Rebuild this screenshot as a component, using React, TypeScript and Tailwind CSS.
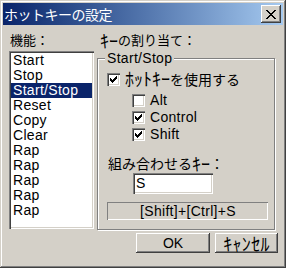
import React from 'react';

const items = ['Start', 'Stop', 'Start/Stop', 'Reset', 'Copy', 'Clear', 'Rap', 'Rap', 'Rap', 'Rap', 'Rap'];

const jp = { fontFamily: '"Noto Sans CJK JP", sans-serif' };

const raised =
  'shadow-[inset_-1px_-1px_0_#404040,inset_1px_1px_0_#ffffff,inset_-2px_-2px_0_#808080,inset_2px_2px_0_#d4d0c8]';
const sunken =
  'shadow-[inset_1px_1px_0_#808080,inset_2px_2px_0_#404040,inset_-1px_-1px_0_#ffffff,inset_-2px_-2px_0_#d4d0c8]';

function Kana({ children }: { children: React.ReactNode }) {
  return <span className="inline-block text-[18px] leading-[14px] align-top">{children}</span>;
}

function Check() {
  return (
    <svg width="7" height="7" viewBox="0 0 7 7" shapeRendering="crispEdges">
      <path d="M0 2h1v1h1v1h1v-1h1v-1h1v-1h1v-1h1v3h-1v1h-1v1h-1v1h-1v1h-1v-1h-1v-1h-1v-1h-1z" fill="#000" />
    </svg>
  );
}

function CheckBox({ checked, label }: { checked: boolean; label: string }) {
  return (
    <div className="flex items-center gap-[5px] h-[17px]">
      <span className={`w-[13px] h-[13px] bg-white flex items-center justify-center ${sunken}`}>
        {checked && <Check />}
      </span>
      <span className="text-[14px] leading-[17px] tracking-[0.3px]">{label}</span>
    </div>
  );
}

export default function App() {
  return (
    <div
      className="w-[286px] h-[268px] bg-[#d4d0c8] p-[3px] flex flex-col text-black shadow-[inset_-1px_-1px_0_#404040,inset_1px_1px_0_#d4d0c8,inset_-2px_-2px_0_#808080,inset_2px_2px_0_#ffffff]"
      style={{ fontFamily: '"Liberation Sans", "Noto Sans CJK JP", sans-serif' }}
    >
      <div className="h-[22px] flex items-center justify-between bg-gradient-to-r from-[#0a246a] to-[#a6caf0] pl-[1px] pr-[2px]">
        <span className="text-white text-[14px] leading-[22px] tracking-[-0.5px]" style={jp}>
          ホットキーの設定
        </span>
        <button className={`w-[20px] h-[18px] bg-[#d4d0c8] flex items-center justify-center ${raised}`}>
          <svg width="10" height="9" viewBox="0 0 10 9" shapeRendering="crispEdges">
            <path d="M0 0h2l3 3.5L8 0h2L6 4.5 10 9H8L5 5.5 2 9H0l4-4.5z" fill="#000" />
          </svg>
        </button>
      </div>

      <div className="flex pl-[6px] pt-[8px] gap-[3px]">
        <div className="w-[85px] flex flex-col">
          <div className="h-[14px] text-[13px] leading-[14px] pl-[1px]" style={jp}>
            機能：
          </div>
          <div className={`mt-[4px] h-[178px] bg-white p-[2px] ${sunken}`}>
            {items.map((it, i) => (
              <div
                key={i}
                className={`h-[15px] text-[14px] leading-[15px] pl-[2px] tracking-[0.3px] ${i === 2 ? 'bg-[#0a246a] text-white' : ''}`}
              >
                {it}
              </div>
            ))}
          </div>
        </div>

        <div className="w-[179px] flex flex-col">
          <div className="h-[14px] text-[13px] leading-[14px] pl-[3px] whitespace-nowrap" style={jp}>
            <Kana>ｷｰ</Kana>の割り当て：
          </div>
          <fieldset className="mt-[4px] w-[178px] h-[179px] border border-[#808080] shadow-[inset_1px_1px_0_#ffffff,1px_1px_0_#ffffff]">
            <legend className="ml-[7px] px-[2px] bg-[#d4d0c8] text-[14px] leading-[14px] tracking-[0.3px]">Start/Stop</legend>
            <div className="pl-[9px] mt-[6px]">
              <div className="flex items-center gap-[5px] h-[16px]">
                <span className={`w-[13px] h-[13px] bg-white flex items-center justify-center ${sunken}`}>
                  <Check />
                </span>
                <span className="text-[14px] leading-[16px] whitespace-nowrap" style={jp}>
                  <Kana>ﾎｯﾄｷｰ</Kana>を使用する
                </span>
              </div>
            </div>
            <div className="pl-[34px] mt-[5px] flex flex-col">
              <CheckBox checked={false} label="Alt" />
              <CheckBox checked label="Control" />
              <CheckBox checked label="Shift" />
            </div>
            <div className="pl-[10px] mt-[13px] h-[14px] text-[14px] leading-[14px] whitespace-nowrap" style={jp}>
              組み合わせる<Kana>ｷｰ</Kana>：
            </div>
            <div className={`ml-[35px] mt-[3px] w-[80px] h-[21px] bg-white pl-[3px] text-[14px] leading-[21px] ${sunken}`}>
              S
            </div>
            <div className="ml-[9px] mt-[8px] w-[161px] h-[18px] border-t border-l border-[#808080] shadow-[inset_-1px_-1px_0_#ffffff] text-center text-[14px] leading-[16px] tracking-[0.3px]">
              [Shift]+[Ctrl]+S
            </div>
          </fieldset>
        </div>
      </div>

      <div className="flex justify-end gap-[5px] pr-[5px] mt-[3px]">
        <button className={`w-[74px] h-[20px] bg-[#d4d0c8] text-[14px] leading-[20px] ${raised}`}>OK</button>
        <button className={`w-[63px] h-[20px] bg-[#d4d0c8] leading-[20px] ${raised}`} style={jp}>
          <span className="text-[18px] tracking-[0.3px]">ｷｬﾝｾﾙ</span>
        </button>
      </div>
    </div>
  );
}
